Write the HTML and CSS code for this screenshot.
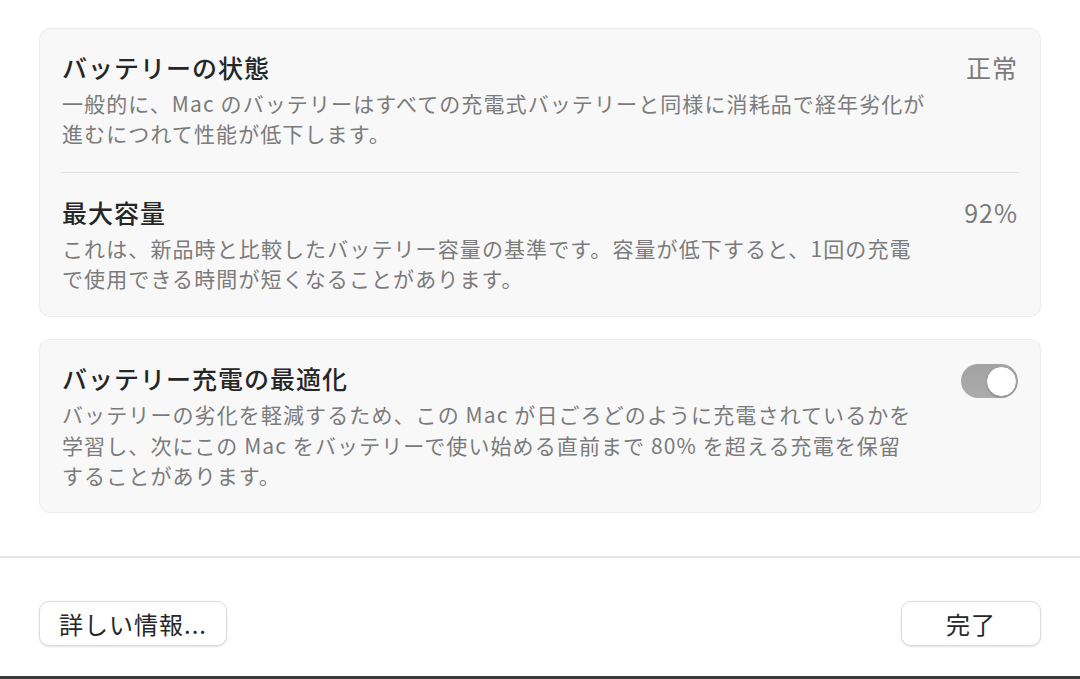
FILE: index.html
```html
<!DOCTYPE html>
<html lang="ja">
<head>
<meta charset="utf-8">
<title>バッテリー</title>
<link rel="stylesheet" href="styles.css">
</head>
<body>
<div class="window">
  <main class="content">
    <section class="card">
      <div class="row row-first">
        <div class="text">
          <h2 class="title">バッテリーの状態</h2>
          <p class="desc">一般的に、Mac のバッテリーはすべての充電式バッテリーと同様に消耗品で経年劣化が<br>進むにつれて性能が低下します。</p>
        </div>
        <div class="value">正常</div>
      </div>
      <div class="row row-sep">
        <div class="text">
          <h2 class="title">最大容量</h2>
          <p class="desc">これは、新品時と比較したバッテリー容量の基準です。容量が低下すると、1回の充電<br>で使用できる時間が短くなることがあります。</p>
        </div>
        <div class="value">92%</div>
      </div>
    </section>
    <section class="card">
      <div class="row row-single">
        <div class="text">
          <h2 class="title">バッテリー充電の最適化</h2>
          <p class="desc desc-wide">バッテリーの劣化を軽減するため、この Mac が日ごろどのように充電されているかを<br>学習し、次にこの Mac をバッテリーで使い始める直前まで 80% を超える充電を保留<br>することがあります。</p>
        </div>
        <div class="toggle" role="switch" aria-checked="true"><span class="knob"></span></div>
      </div>
    </section>
  </main>
  <footer class="footer">
    <button class="btn btn-info">詳しい情報...</button>
    <button class="btn btn-done">完了</button>
  </footer>
</div>
</body>
</html>
```
FILE: styles.css
```css
* { box-sizing: border-box; }
html, body { margin: 0; padding: 0; }
body {
  width: 1080px;
  height: 679px;
  background: #ffffff;
  font-family: "Noto Sans CJK JP", "Noto Sans", sans-serif;
  color: #262626;
  overflow: hidden;
}
.window {
  height: 679px;
  display: flex;
  flex-direction: column;
  border-bottom: 3px solid #3a3a3a;
}
.content {
  padding: 28px 39px 0;
  display: flex;
  flex-direction: column;
  gap: 22px;
}
.card {
  background: #f8f8f8;
  border: 1px solid #ececec;
  border-radius: 11px;
  padding: 0 22px;
}
.row {
  display: flex;
  justify-content: space-between;
  align-items: flex-start;
  padding: 21px 0 22px;
}
.row-first { padding-bottom: 24px; }
.row-sep {
  border-top: 1px solid #e2e2e2;
  padding-top: 22px;
  padding-bottom: 23px;
}
.row-single { padding-bottom: 21px; }
.title {
  margin: 0 0 4px;
  font-size: 25px;
  line-height: 34px;
  font-weight: 500;
  letter-spacing: 1px;
  color: #262626;
}
.desc {
  margin: 0;
  font-size: 21px;
  line-height: 30px;
  letter-spacing: 1.1px;
  color: #7b7b7b;
  white-space: nowrap;
}
.desc-wide { line-height: 30.5px; }
.value {
  font-size: 25px;
  line-height: 34px;
  letter-spacing: 1px;
  color: #7a7a7a;
}
.toggle {
  margin-top: 3px;
  width: 57px;
  height: 34px;
  border-radius: 17px;
  background: linear-gradient(#a2a2a2, #ababab);
  display: flex;
  justify-content: flex-end;
  align-items: center;
  padding: 1px;
}
.knob {
  width: 31px;
  height: 31px;
  border-radius: 50%;
  background: #ffffff;
  border: 1px solid #9a9a9a;
  box-shadow: 0 1px 1px rgba(0,0,0,0.15);
}
.footer {
  margin-top: 43px;
  border-top: 2px solid #e4e4e4;
  padding: 43px 39px 0;
  display: flex;
  justify-content: space-between;
}
.btn {
  height: 45px;
  background: #ffffff;
  border: 1px solid #dcdcdc;
  border-radius: 10px;
  box-shadow: 0 1px 2px rgba(0,0,0,0.12);
  font-family: "Noto Sans CJK JP", "Noto Sans", sans-serif;
  font-size: 24px;
  letter-spacing: 1px;
  color: #262626;
  padding: 0 18px;
}
.btn-info { width: 188px; }
.btn-done { width: 140px; }
```
